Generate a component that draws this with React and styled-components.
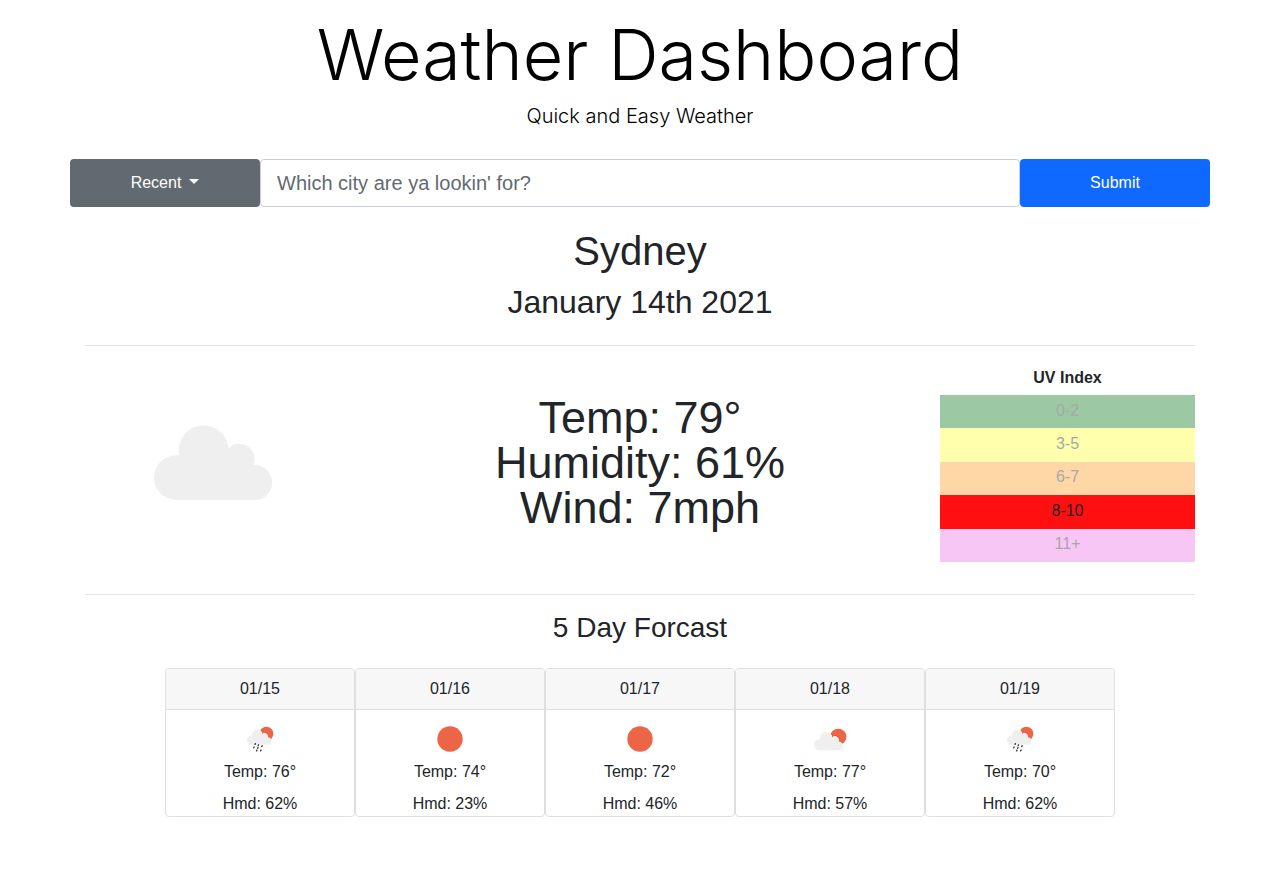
import React, { useId } from "react";
import styled, { createGlobalStyle } from "styled-components";

const GlobalStyle = createGlobalStyle`
  *, *::before, *::after { box-sizing: border-box; }
  body {
    margin: 0 2px 0 0;
    background: #fff;
    color: #212529;
    font: 400 16px/24px "Liberation Sans", Arial, sans-serif;
  }
`;

const Page = styled.div`
  max-width: 1140px;
  margin: 0 auto;
  padding: 12px 0 48px;
`;

const Header = styled.header`
  color: #000;
  text-align: center;
  font-family: Inter, sans-serif;
  font-weight: 300;
`;

const Title = styled.h1`
  margin: 0;
  font-size: 70px;
  line-height: 86px;
  font-weight: 300;
`;

const Tagline = styled.p`
  margin: 4px 0 28px;
  font-size: 20px;
  line-height: 29px;
`;

const SearchBar = styled.form`
  display: grid;
  grid-template-columns: 1fr 4fr 1fr;
  height: 48px;
`;

const Button = styled.button`
  display: flex;
  align-items: center;
  justify-content: center;
  gap: 8px;
  border: 0;
  border-radius: 4px;
  background: ${(p) => (p.$primary ? "#0f69ff" : "#626a71")};
  color: #fff;
  font: inherit;
  cursor: pointer;
`;

const Caret = styled.span`
  border: 5px solid transparent;
  border-top-color: currentColor;
  border-bottom: 0;
  margin-bottom: 3px;
`;

const CityInput = styled.input`
  min-width: 0;
  padding: 8px 16px;
  border: 1px solid #c8ced5;
  border-radius: 4px;
  background: #fff;
  color: #212529;
  font: inherit;
  font-size: 20px;
  &::placeholder { color: #626a71; opacity: 1; }
`;

const Main = styled.main`
  padding: 20px 15px 0;
  text-align: center;
`;

const City = styled.h2`
  margin: 0 0 8px;
  font-size: 40px;
  line-height: 48px;
  font-weight: 400;
`;

const Today = styled.h3`
  margin: 0 0 24px;
  font-size: 32px;
  line-height: 38px;
  font-weight: 400;
`;

const Divider = styled.hr`
  margin: 0 0 15px;
  border: 0;
  border-top: 1px solid #e3e3e4;
`;

const Current = styled.section`
  display: grid;
  grid-template-columns: 1fr 2fr 1fr;
  align-items: center;
  margin: 0 -15px 32px;
`;

const Column = styled.div`
  padding: 0 15px;
`;

const Readings = styled(Column)`
  padding-top: 2px;
  font-size: 45px;
  line-height: 45px;
`;

const Reading = styled.p`
  margin: 0;
`;

const CloudImage = styled.svg`
  display: block;
  margin: 0 auto;
`;

const UvTable = styled.table`
  width: 100%;
  height: 201px;
  border-collapse: collapse;
`;

const UvHead = styled.th`
  height: 34px;
  padding: 4px;
`;

const UvCell = styled.td`
  padding: 3px 4px 5px;
  background: ${(p) => p.$color};
  color: ${(p) => (p.$active ? "#212529" : "#a6a8a9")};
`;

const ForecastTitle = styled.h4`
  margin: 0 0 22px;
  font-size: 28px;
  line-height: 36px;
  font-weight: 400;
`;

const Forecast = styled.section`
  display: grid;
  grid-template-columns: repeat(5, 1fr);
  max-width: 950px;
  margin: 0 auto;
`;

const Card = styled.article`
  border: 1px solid #dfdfdf;
  border-radius: 4px;
  overflow: hidden;
`;

const CardDate = styled.header`
  padding: 8px;
  border-bottom: 1px solid #dfdfdf;
  background: #f7f7f7;
`;

const CardBody = styled.div`
  display: flex;
  flex-direction: column;
  align-items: center;
`;

const CardLine = styled.p`
  margin: 0 0 8px;
  &:last-child { margin-bottom: 0; }
`;

const CLOUD =
  "M22.4 75A22.4 22.4 0 0 1 22.4 30.2Q23.9 30.1 25.4 30.3A24.8 24.8 0 1 1 74.4 23.7A15 15 0 0 1 99.2 40A17.5 17.5 0 1 1 102 75Z";

const BigCloud = () => (
  <CloudImage width="122" height="78" viewBox="-2 -2 122 78" role="img" aria-label="Cloudy">
    <path d={CLOUD} fill="#efefef" />
  </CloudImage>
);

const DROPS = [
  [20.2, 34], [23.3, 35.3], [27, 36.2], [18.9, 37.4],
  [22.8, 37.9], [21.7, 40.5], [25.8, 40.5],
];

const SunBehindCloud = ({ sun, x, y, scale }) => {
  const id = useId();
  const place = `translate(${x} ${y}) scale(${scale})`;
  return (
    <>
      <clipPath id={id}>
        <circle cx={sun[0]} cy={sun[1]} r={sun[2]} />
      </clipPath>
      <g clipPath={`url(#${id})`}>
        <rect width="50" height="50" fill="#ec6547" />
        <path d={CLOUD} transform={place} fill="none" stroke="#e8492c" strokeWidth="10" strokeDasharray="5 4" />
        <path d={CLOUD} transform={place} fill="#fff" stroke="#fff" strokeWidth="2" />
      </g>
      <path d={CLOUD} transform={place} fill="#efefef" />
    </>
  );
};

const WeatherIcon = ({ kind }) => (
  <svg width="50" height="50" viewBox="0 0 50 50" role="img" aria-label={kind}>
    {kind === "Sunny" && <circle cx="25" cy="29" r="12.7" fill="#ec6547" />}
    {kind === "Partly cloudy" && (
      <SunBehindCloud sun={[33.3, 26.8, 8.1]} x={9} y={21.9} scale={0.245} />
    )}
    {kind === "Rain showers" && (
      <>
        <SunBehindCloud sun={[31.4, 23.7, 7]} x={12} y={19.4} scale={0.205} />
        {DROPS.map(([x, y]) => (
          <path key={`${x}-${y}`} d={`M${x + 0.2} ${y - 0.4}l-0.4 0.8`} stroke="#333" strokeWidth="1.3" strokeLinecap="round" />
        ))}
      </>
    )}
  </svg>
);

const uvLevels = [
  { range: "0-2", color: "#9cc9a3" },
  { range: "3-5", color: "#ffffac" },
  { range: "6-7", color: "#ffd7a6" },
  { range: "8-10", color: "#ff0f0f", active: true },
  { range: "11+", color: "#f7c6f4" },
];

const days = [
  { date: "01/15", kind: "Rain showers", temp: 76, humidity: 62 },
  { date: "01/16", kind: "Sunny", temp: 74, humidity: 23 },
  { date: "01/17", kind: "Sunny", temp: 72, humidity: 46 },
  { date: "01/18", kind: "Partly cloudy", temp: 77, humidity: 57 },
  { date: "01/19", kind: "Rain showers", temp: 70, humidity: 62 },
];

export default function App() {
  return (
    <>
      <GlobalStyle />
      <Page>
        <Header>
          <Title>Weather Dashboard</Title>
          <Tagline>Quick and Easy Weather</Tagline>
        </Header>
        <SearchBar onSubmit={(e) => e.preventDefault()}>
          <Button type="button" aria-haspopup="menu">
            Recent <Caret />
          </Button>
          <CityInput type="text" aria-label="City" placeholder="Which city are ya lookin' for?" />
          <Button type="submit" $primary>Submit</Button>
        </SearchBar>
        <Main>
          <City>Sydney</City>
          <Today>January 14th 2021</Today>
          <Divider />
          <Current>
            <Column><BigCloud /></Column>
            <Readings>
              <Reading>Temp: 79°</Reading>
              <Reading>Humidity: 61%</Reading>
              <Reading>Wind: 7mph</Reading>
            </Readings>
            <Column>
              <UvTable>
                <thead>
                  <tr><UvHead scope="col">UV Index</UvHead></tr>
                </thead>
                <tbody>
                  {uvLevels.map((u) => (
                    <tr key={u.range}>
                      <UvCell $color={u.color} $active={u.active}>{u.range}</UvCell>
                    </tr>
                  ))}
                </tbody>
              </UvTable>
            </Column>
          </Current>
          <Divider />
          <ForecastTitle>5 Day Forcast</ForecastTitle>
          <Forecast>
            {days.map((d) => (
              <Card key={d.date}>
                <CardDate>{d.date}</CardDate>
                <CardBody>
                  <WeatherIcon kind={d.kind} />
                  <CardLine>Temp: {d.temp}°</CardLine>
                  <CardLine>Hmd: {d.humidity}%</CardLine>
                </CardBody>
              </Card>
            ))}
          </Forecast>
        </Main>
      </Page>
    </>
  );
}
